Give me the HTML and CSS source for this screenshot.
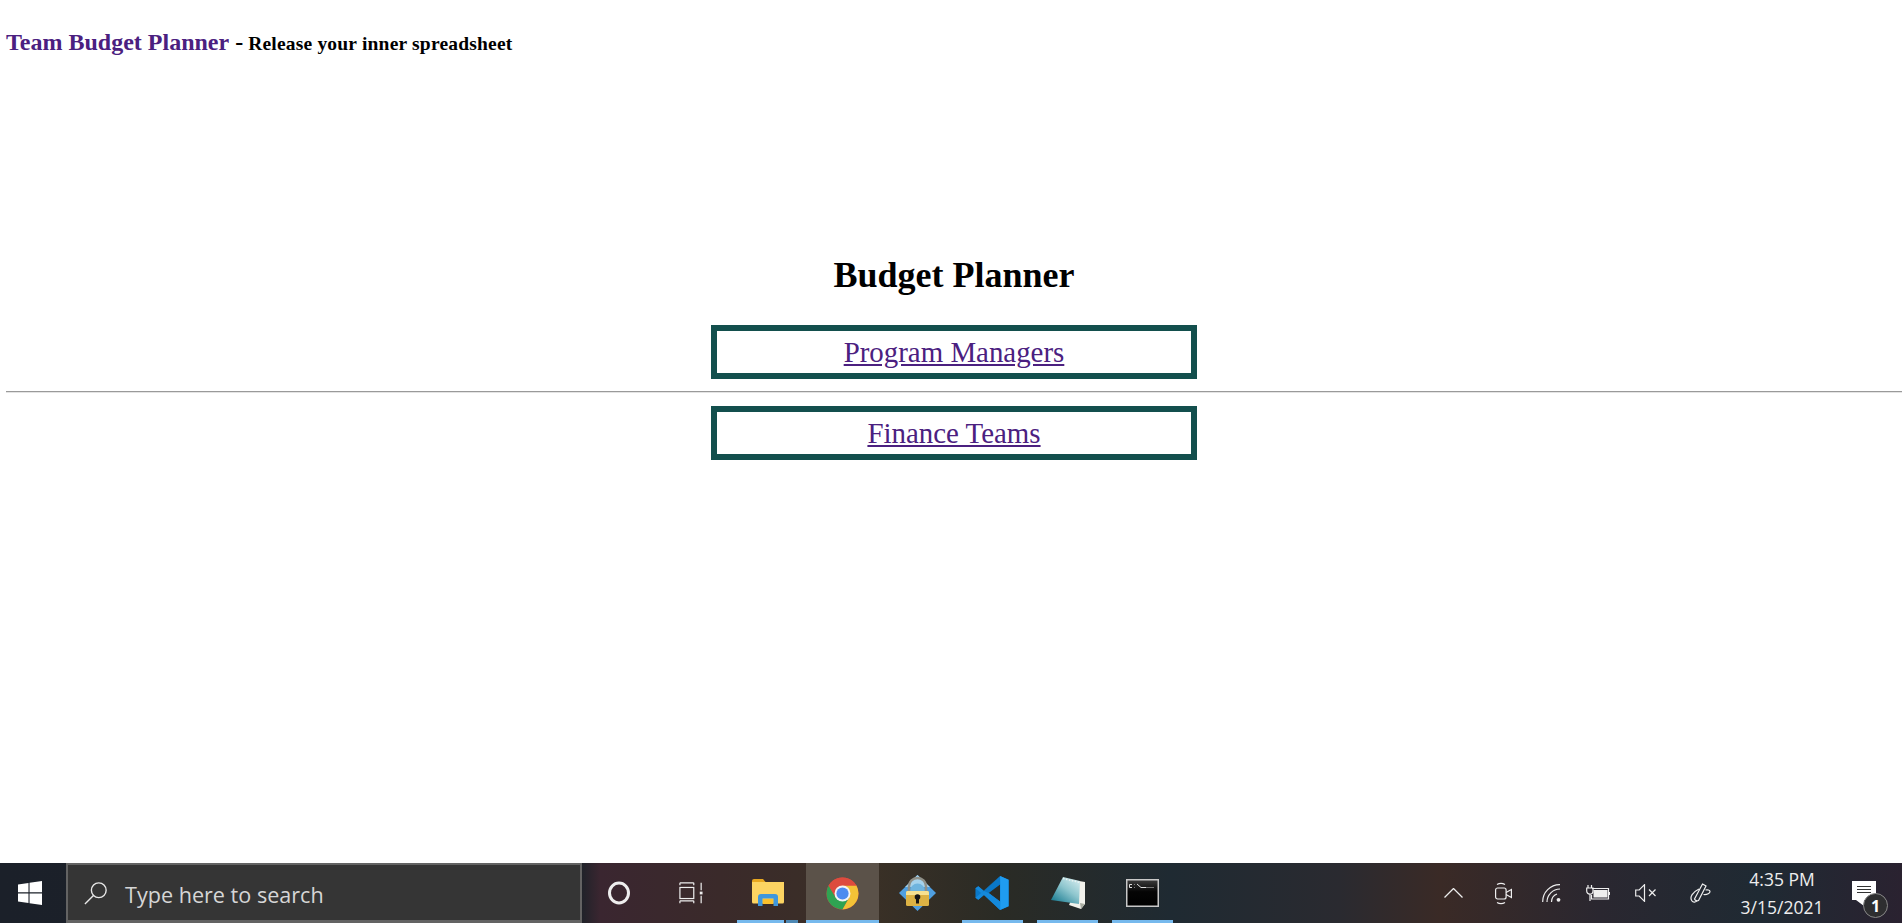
FILE: index.html
```html
<!DOCTYPE html>
<html lang="en">
<head>
<meta charset="utf-8">
<title>Team Budget Planner</title>
<link rel="stylesheet" href="styles.css">
</head>
<body>
<div class="page">
  <div class="content">
    <header class="topbar">
      <span class="brand">Team Budget Planner</span>
      <span class="dash">-</span>
      <span class="tagline">Release your inner spreadsheet</span>
    </header>
    <h1 class="title">Budget Planner</h1>
    <div class="linkbox"><a href="#">Program Managers</a></div>
    <hr class="rule">
    <div class="linkbox"><a href="#">Finance Teams</a></div>
  </div>
  <footer class="taskbar">
    <div class="start">
      <svg width="24" height="24" viewBox="2 2 22 22"><path fill="#fff" d="M2 5.200l9.600-1.400v8.600H2zM12.600 3.600L24 2v10.400H12.600zM2 13.500h9.600v8.700L2 20.800zM12.600 13.500H24V24l-11.400-1.600z"/></svg>
    </div>
    <div class="search">
      <svg width="24" height="24" viewBox="0 0 26 26" fill="none" stroke="#e8e8e8" stroke-width="1.500"><circle cx="16" cy="10" r="8"/><path d="M10.500 15.500L1 25"/></svg>
      <span class="search-text">Type here to search</span>
    </div>
    <div class="apps">
      <div class="app w-cortana"><svg width="24" height="24" viewBox="0 0 24 24" fill="none" stroke="#eee" stroke-width="3"><ellipse cx="12" cy="12" rx="9.500" ry="10"/></svg></div>
      <div class="app w-task"><svg width="24" height="24" viewBox="0 0 26 24" fill="none" stroke="#eee" stroke-width="1.300"><path d="M1 3.500V1M16 3.500V1M1 1h15M1 23v-2.500M16 23v-2.500M1 20.500h15"/><rect x="1" y="6" width="15" height="12"/><path d="M24 1v8M24 15v8"/><rect x="22.500" y="10.500" width="3" height="3" fill="#eee" stroke="none"/></svg></div>
      <div class="app w-files">
        <svg width="32" height="28" viewBox="0 0 32 28"><path fill="#e8a820" d="M0 2a2 2 0 0 1 2-2h9l3 3.500H0z"/><path fill="#fcd462" d="M0 3h32v20a1.500 1.500 0 0 1-1.500 1.500h-29A1.500 1.500 0 0 1 0 23z"/><path fill="#fbc02d" d="M10.500 20h11v5h-11z"/><path fill="#3f97dc" d="M6 27v-9a3 3 0 0 1 3-3h14a3 3 0 0 1 3 3v9h-4.500v-7.500h-11V27z"/></svg>
      </div>
      <div class="app w-chrome">
        <svg width="33" height="33" viewBox="0 0 34 34"><circle cx="17" cy="17" r="16.500" fill="#dd4b3e"/><path fill="#2fa352" d="M2.700 8.800A16.500 16.500 0 0 0 17 33.500l7-12.500H10z"/><path fill="#f3c237" d="M17 33.500A16.500 16.500 0 0 0 31.300 8.800H17l7 12.200z"/><path fill="#dd4b3e" d="M2.700 8.800A16.500 16.500 0 0 1 31.300 8.800H17a8 8 0 0 0-7 12.200z"/><circle cx="17" cy="17" r="8.200" fill="#f4f4f4"/><circle cx="17" cy="17" r="6.300" fill="#4c8bf0"/></svg>
      </div>
      <div class="app w-lock">
        <svg width="37" height="36" viewBox="0 0 37 36"><path fill="#4f9fe0" d="M18.500 0L37 18 18.500 36 0 18z"/><path fill="#a5d2ec" d="M18.500 0L31 12H6z"/><path fill="#6fb4de" d="M11 16a7.500 7.500 0 0 1 15 0z"/><path fill="none" stroke="#8f9088" stroke-width="2.500" d="M10 17v-6a8.500 8 0 0 1 17 0v6"/><rect x="7" y="16" width="23" height="15" rx="1.500" fill="#dcb244"/><path fill="#f6e192" d="M7 17.500A1.500 1.500 0 0 1 8.500 16h20a1.500 1.500 0 0 1 1.500 1.500V20H7z"/><circle cx="18.500" cy="22" r="2.800" fill="#151515"/><path fill="#151515" d="M17 23h3v5.500h-3z"/></svg>
      </div>
      <div class="app w-vscode">
        <svg width="37" height="36" viewBox="0 0 36 38"><path fill="#0a78c8" d="M26 1L9 17 3 12 0 14v10l3 2 6-5 17 16 9-4V5zM26 10v18L14 19z"/><path fill="#1f9cf0" d="M26 1l9 4v28l-9 4 .100-9V10z"/><path fill="#1489dc" d="M26 1L9 17 3 12 0 14l6 5 20-18zM6 19l-6 5 3 2 6-5 17 16v-9L14 19l-5-2z"/></svg>
      </div>
      <div class="app w-note">
        <svg width="35" height="32" viewBox="0 0 35 32"><defs><linearGradient id="notepad" x1="0.800" y1="0" x2="0.100" y2="0.900"><stop offset="0" stop-color="#cfe9ec"/><stop offset="0.450" stop-color="#8ec6ce"/><stop offset="1" stop-color="#1f7f94"/></linearGradient></defs><path fill="#f2f2ec" d="M29 4l6 1v22l-4 5-12-4z"/><path fill="#a9ada2" d="M31 32l-1-6 5 1z"/><path fill="url(#notepad)" d="M13 0l17 4-1 23L1 23z"/><path fill="none" stroke="#e9f2f2" stroke-width="1.500" stroke-dasharray="1.500 1.500" d="M13 1.500l17 4"/></svg>
      </div>
      <div class="app w-cmd">
        <svg width="33" height="28" viewBox="0 0 33 28"><defs><linearGradient id="console" x1="0" y1="0" x2="0" y2="1"><stop offset="0" stop-color="#3a3a3a"/><stop offset="0.450" stop-color="#050505"/><stop offset="1" stop-color="#000"/></linearGradient></defs><rect width="33" height="28" fill="#c8c8c8"/><rect x="1.500" y="1.500" width="30" height="25" fill="url(#console)"/><path fill="none" stroke="#ddd" stroke-width="1" d="M6 5.500H3.500v3H6M8.500 5.500v.500M8.500 8v.500M11 5l4 3.500h5"/><path stroke="#777" stroke-width="1" d="M20 8.500h8"/></svg>
      </div>
    </div>
    <div class="tray">
      <svg class="t-up" width="19" height="10" viewBox="0 0 19 10" fill="none" stroke="#eee" stroke-width="1.300"><path d="M.500 9.500l9-9 9 9"/></svg>
      <svg class="t-meet" width="17" height="23" viewBox="0 0 17 23" fill="none" stroke="#eee" stroke-width="1.200"><path d="M2 2.500a8 8 0 0 1 8 0M2 20.500a8 8 0 0 0 8 0"/><rect x=".600" y="6" width="10.500" height="11" rx="2"/><path d="M11 10.500l5.400-3v8l-5.400-3"/></svg>
      <svg class="t-wifi" width="19" height="18" viewBox="0 0 19 18" fill="none" stroke="#eee" stroke-width="1.200"><path d="M.700 18A17 17 0 0 1 18 .700M5 18A13 13 0 0 1 18 5M9.500 18A8.500 8.500 0 0 1 15 10"/><circle cx="16.500" cy="15.800" r="1.900" fill="#eee" stroke="none"/></svg>
      <svg class="t-batt" width="24" height="16" viewBox="0 0 24 16" fill="none" stroke="#eee" stroke-width="1.200"><path d="M2 0v3M5.500 0v3M.700 3h6.300v3a3 3 0 0 1-6.300 0zM4 9v7"/><path stroke="#eee" d="M6 3.500h16.500v10.500H5.500V10"/><rect x="7.500" y="5" width="14" height="7.500" fill="#eee" stroke="none"/><path d="M23.500 7v3"/></svg>
      <svg class="t-sound" width="21" height="18" viewBox="0 0 21 18" fill="none" stroke="#eee" stroke-width="1.200"><path d="M.700 6h3.500L9.500.700v16.600L4.200 12H.700zM14 5.500l6.500 6.500M20.500 5.500L14 12"/></svg>
      <svg class="t-pen" width="21" height="20" viewBox="0 0 21 20" fill="none" stroke="#eee" stroke-width="1.200"><path d="M12.500 1l3.500 2L8.500 17.500a3 3 0 0 1-4-1.500z"/><path d="M9 6C3 9-1 14 2 18c1 1.500 4 1.500 5-.500M15.500 7c2-.500 4.500 0 4.500 1.500S17.500 12 13.500 11.500"/></svg>
      <div class="clock"><span>4:35 PM</span><span>3/15/2021</span></div>
      <div class="notif">
        <svg width="24" height="25" viewBox="0 0 24 25"><path fill="#fff" d="M0 0h24v19H12v6l-8-6H0z"/><path stroke="#333" stroke-width="1" d="M5 5.500h14M5 8.500h14M5 11.500h14"/></svg>
        <span class="badge">1</span>
      </div>
    </div>
  </footer>
</div>
</body>
</html>
```
FILE: styles.css
```css
* { box-sizing: border-box; }
html, body { margin: 0; padding: 0; background: #fff; overflow: hidden; }
.page { width: 1902px; height: 923px; display: flex; flex-direction: column; }
.content { flex: 1; padding: 29px 0 0 6px; font-family: "Liberation Serif", serif; }
.topbar { height: 30px; display: flex; align-items: baseline; font-weight: bold; color: #000; }
.brand { color: #4b2080; font-size: 24px; }
.dash { font-size: 24px; margin-left: 6px; }
.tagline { font-size: 19.500px; margin-left: 5px; letter-spacing: .2px; }
.title { margin: 195px 0 0; text-align: center; font-size: 36px; line-height: 43px; font-weight: bold; color: #000; }
.linkbox { width: 486px; height: 54px; margin: 0 auto; border: 6px solid #134f4d; display: flex; align-items: center; justify-content: center; font-size: 28.900px; }
.title + .linkbox { margin-top: 28px; }
.linkbox a { color: #4b2080; }
.rule { margin: 12px -6px 13px 0; border: 0; border-top: 1px solid #9a9a9a; border-bottom: 1px solid #e4e4e4; height: 2px; }
.taskbar { height: 60px; display: flex; align-items: stretch; color: #eee; font-family: "Open Sans", "Noto Sans", sans-serif;
  background: linear-gradient(90deg, #1b2029 0, #1d2229 580px, #3a2630 600px, #3a2a2a 720px, #3a3026 870px, #2a2b25 1000px, #1f2a32 1170px, #2a2a30 1340px, #3a2a26 1440px, #2a2730 1600px, #1f2a33 1760px, #2a2230 1902px); }
.start { width: 66px; padding-right: 6px; display: flex; align-items: center; justify-content: center; }
.search { width: 516px; height: 60px; background: #353535; border: 2px solid #636363; border-bottom-width: 3px; display: flex; align-items: center; padding-left: 16px; gap: 17px; }
.search-text { font-size: 21.600px; color: #d6d6d6; padding-top: 4px; }
.apps { display: flex; }
.app { display: flex; align-items: center; justify-content: center; width: 75px; height: 60px; position: relative; }
.w-cortana { width: 73px; }
.w-task { width: 71px; margin-right: 4px; }
.w-files::after, .w-files::before, .w-vscode::after, .w-note::after, .w-cmd::after { content: ""; position: absolute; bottom: 0; height: 3px; background: #76b9ed; }
.w-files::after { left: 7px; width: 47px; }
.w-files::before { left: 56px; width: 12px; background: #4d88b4; }
.w-vscode::after, .w-note::after, .w-cmd::after { left: 7px; right: 7px; }
.w-chrome { background: #5b5249; width: 73px; margin: 0 1px; border-bottom: 3px solid #76b9ed; padding-top: 3px; }
.tray { flex: 1; display: flex; align-items: center; padding-left: 264px; }
.t-meet { margin-left: 32px; }
.t-wifi { margin-left: 30px; }
.t-batt { margin-left: 25px; }
.t-sound { margin-left: 25px; }
.t-pen { margin-left: 34px; }
.clock { margin-left: 29px; width: 84px; display: flex; flex-direction: column; align-items: center; font-size: 17.500px; line-height: 28px; }
.notif { margin-left: 28px; position: relative; width: 36px; height: 36px; align-self: flex-start; margin-top: 18px; }
.notif svg { display: block; }
.badge { position: absolute; left: 11px; top: 12px; width: 25px; height: 25px; border-radius: 50%; background: #2e2e30; border: 1.500px solid #888; color: #fff; font-size: 16px; font-weight: bold; display: flex; align-items: center; justify-content: center; }
```
